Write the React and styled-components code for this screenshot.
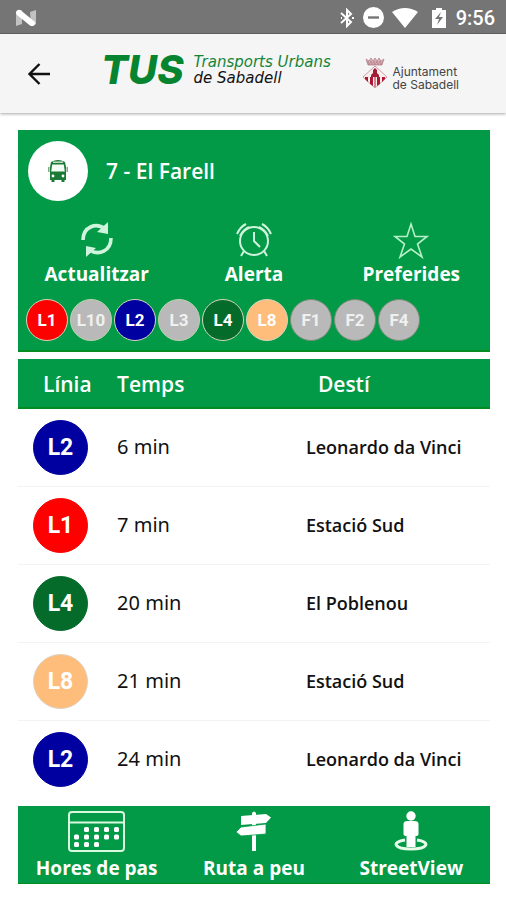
import React from "react";
import styled, { createGlobalStyle } from "styled-components";

const GlobalStyle = createGlobalStyle`
  *, *::before, *::after { box-sizing: border-box; }
  body {
    margin: 0;
    background: #fff;
    color: #111;
    font-family: "Noto Sans", "Open Sans", sans-serif;
  }
`;

const GREEN = "#029a46";

const Screen = styled.div`
  min-height: 100vh;
  display: flex;
  flex-direction: column;
`;

const StatusBar = styled.div`
  height: 34px;
  padding: 2px 11px 0 15px;
  display: flex;
  align-items: center;
  justify-content: space-between;
  background: #757575;
  border-bottom: 1px solid #646464;
  color: #fff;
`;

const StatusIcons = styled.div`
  display: flex;
  align-items: center;
  gap: 8px;
`;

const Clock = styled.time`
  font: 500 20px/24px Roboto, sans-serif;
  margin-left: 2px;
`;

const AppBar = styled.header`
  height: 79px;
  padding: 0 47px 0 23px;
  display: flex;
  align-items: center;
  background: #f5f5f5;
  box-shadow: 0 1px 3px rgba(0, 0, 0, 0.35);
`;

const BackButton = styled.button`
  display: flex;
  padding: 4px;
  border: 0;
  background: none;
  color: #111;
  cursor: pointer;
`;

const TusBrand = styled.div`
  display: flex;
  align-items: center;
  gap: 10px;
  margin-left: 46px;
  padding-bottom: 8px;
`;

const TusMark = styled.span`
  color: #06842f;
  font: italic 800 40px/32px Inter, sans-serif;
`;

const TusName = styled.span`
  display: flex;
  flex-direction: column;
  color: #111;
  font: italic 400 15px/16px "DejaVu Sans", sans-serif;
  white-space: nowrap;
`;

const GreenText = styled.span`
  color: #16853a;
`;

const CouncilBrand = styled.div`
  display: flex;
  align-items: center;
  gap: 4px;
  margin-left: auto;
`;

const CouncilName = styled.span`
  display: flex;
  flex-direction: column;
  padding-top: 8px;
  color: #444;
  font: 12px/13px Inter, sans-serif;
  white-space: nowrap;
`;

const Content = styled.main`
  flex: 1;
  display: flex;
  flex-direction: column;
  padding: 17px 16px 16px 18px;
`;

const StopCard = styled.section`
  padding: 11px 0 9px;
  background: ${GREEN};
  color: #fff;
  border-bottom: 2px solid #048c22;
`;

const StopTitle = styled.div`
  display: flex;
  align-items: center;
  gap: 18px;
  padding-left: 10px;
`;

const BusCircle = styled.span`
  display: grid;
  place-items: center;
  width: 60px;
  height: 60px;
  border-radius: 50%;
  background: #fff;
`;

const StopName = styled.h1`
  margin: 0;
  font: 600 21px/28px "Open Sans", sans-serif;
`;

const Actions = styled.div`
  display: grid;
  grid-template-columns: repeat(3, 1fr);
`;

const TopActions = styled(Actions)`
  padding-top: 19px;
`;

const ActionButton = styled.button`
  display: flex;
  flex-direction: column;
  align-items: center;
  padding: 0;
  border: 0;
  background: none;
  color: #fff;
  font: 700 19px/28px "Open Sans", sans-serif;
  white-space: nowrap;
  cursor: pointer;
`;

const Lines = styled.ul`
  display: flex;
  gap: 2px;
  margin: 0;
  padding: 11px 0 0 8px;
  list-style: none;
`;

const LineBadge = styled.li`
  display: grid;
  place-items: center;
  width: 42px;
  height: 42px;
  border: 1px solid ${(p) => p.$edge || "#d5d5bd"};
  border-radius: 50%;
  background: ${(p) => p.$color};
  color: ${(p) => (p.$off ? "#f0f0f0" : "#fff")};
  font: 700 17px/20px Roboto, sans-serif;
`;

const Timetable = styled.table`
  width: 100%;
  margin-top: 7px;
  border-collapse: collapse;
  table-layout: fixed;
`;

const HeadCell = styled.th`
  width: ${(p) => p.$width};
  height: 49px;
  padding: 2px 0 0 ${(p) => p.$indent};
  background: ${GREEN};
  border-bottom: 2px solid #048c22;
  color: #fff;
  text-align: left;
  font: 600 21px/28px "Open Sans", sans-serif;
`;

const Row = styled.tr`
  height: 78px;
  border-bottom: 1px solid #f3f3f3;
  &:last-child { border-bottom: 0; }
`;

const Cell = styled.td`
  padding: ${(p) => p.$pad || "0"};
  font-size: ${(p) => p.$size || "20px"};
  font-weight: ${(p) => p.$weight || 400};
  line-height: 24px;
  white-space: nowrap;
`;

const Destination = styled(Cell)`
  font-family: "Open Sans", sans-serif;
`;

const RowBadge = styled.span`
  display: grid;
  place-items: center;
  width: 55px;
  height: 55px;
  padding-top: 2px;
  border: 1px solid ${(p) => p.$edge || p.$color};
  border-radius: 50%;
  background: ${(p) => p.$color};
  color: #fff;
  font: 700 23px/28px Roboto, sans-serif;
`;

const BottomBar = styled.nav`
  margin-top: 8px;
  padding: 4px 0 1px;
  background: ${GREEN};
  border-bottom: 1px solid #048c22;
`;

const NougatIcon = () => (
  <svg width="22" height="18" viewBox="0 0 22 18" aria-hidden="true">
    <path d="M1 3l6-2v14l-6 2z" fill="#c2c2c2" />
    <path d="M15 3l6-2v14l-5 2z" fill="#c2c2c2" />
    <path d="M2 1.500q2-1.500 4 0L20 13q1 2-1 3.500-2 1-4 0L2 6q-2-2.500 0-4.500z" fill="#fff" />
  </svg>
);

const BluetoothIcon = () => (
  <svg width="16" height="20" viewBox="0 0 16 20" fill="none" stroke="#fff" strokeWidth="2" aria-hidden="true">
    <path d="M2 5l10 9-4 4V2l4 4-10 9" />
    <path d="M2 10h1M13 10h2" />
  </svg>
);

const DndIcon = () => (
  <svg width="21" height="21" viewBox="0 0 21 21" aria-hidden="true">
    <circle cx="10.5" cy="10.5" r="10.5" fill="#fff" />
    <path d="M5 10.500h11" stroke="#757575" strokeWidth="2.400" />
  </svg>
);

const WifiIcon = () => (
  <svg width="26" height="20" viewBox="0 0 26 20" aria-hidden="true">
    <path d="M0 4q13-8 26 0L13 20z" fill="#fff" />
  </svg>
);

const BatteryIcon = () => (
  <svg width="20" height="20" viewBox="0 0 20 20" aria-hidden="true">
    <path d="M6 2h4V0h6v2h4v18H6z" fill="#fff" />
    <path d="M15 4l-6 7h4l-2 6 6-8h-4z" fill="#757575" />
  </svg>
);

const BackIcon = () => (
  <svg width="24" height="24" viewBox="0 0 24 24" fill="none" stroke="currentColor" strokeWidth="2.400" aria-hidden="true">
    <path d="M12.500 2L2.500 12l10 10M2.500 12H23" />
  </svg>
);

const CrestIcon = () => (
  <svg width="26" height="33" viewBox="0 0 26 33" aria-hidden="true">
    <path d="M4 2l2 6h14l2-6-3 2-2-3-2 3-2-3-2 3-2-3-2 3z" fill="#d6adb3" stroke="#b98792" strokeWidth="0.800" />
    <path d="M5 5h16M6 7h14" stroke="#a87582" strokeDasharray="2 1" />
    <path d="M13 9l12 11-12 11L1 20z" fill="#f8efef" stroke="#d09ba5" />
    <path d="M3 20h3v5l-3-3zM8 20h3v9l-3-2zM15 20h3v7l-3 2zM20 20h3v2l-3 3z" fill="#ad1732" />
    <path d="M11 13l2-2 2 2v3l2 2v2H9v-2l2-2z" fill="#a51d35" />
    <path d="M13 20v10" stroke="#ad1732" />
  </svg>
);

const BusIcon = () => (
  <svg width="20" height="24" viewBox="0 0 20 24" aria-hidden="true">
    <path d="M3 3q7-4 14 0l1 5v13h-1.500v2h-3v-2h-7v2h-3v-2H2V8z" fill="#1b7a35" />
    <path d="M4.200 5.500h11.600l1 7H3.200z" fill="#f4fbf4" />
    <path d="M5 3.200h10" stroke="#c8dccb" strokeWidth="1.500" />
    <path d="M.8 8v5M19.200 8v5" stroke="#5f936b" strokeWidth="1.200" />
    <circle cx="5" cy="17" r="1.400" fill="#fff" />
    <circle cx="15" cy="17" r="1.400" fill="#fff" />
  </svg>
);

const RefreshIcon = () => (
  <svg width="38" height="40" viewBox="0 0 38 40" fill="none" stroke="#cff3dc" strokeWidth="3.600" aria-hidden="true">
    <path d="M5 20C5 7 18 2 27 9" />
    <path d="M33 18c0 13-12 18-22 12" />
    <path d="M30 2v12l-11-2zM8 37V26l10 2z" fill="#cff3dc" stroke="none" />
  </svg>
);

const AlarmIcon = () => (
  <svg width="40" height="40" viewBox="0 0 40 40" fill="none" stroke="#cff3dc" strokeWidth="2" aria-hidden="true">
    <circle cx="20" cy="21" r="14" />
    <path d="M20 12v9l6 6M10 31l-3 5M30 31l3 5" />
    <path d="M3 14Q6 7 12 4M6 16q3-6 9-9M37 14Q34 7 28 4M34 16q-3-6-9-9" />
  </svg>
);

const StarIcon = () => (
  <svg width="40" height="40" viewBox="0 0 40 40" fill="none" stroke="#b5f0c8" strokeWidth="1.600" aria-hidden="true">
    <path d="M20 4l4 12.500h12L26.500 24 31 37l-11-8-11 8 4.500-13L4 16.500h12z" />
  </svg>
);

const CALENDAR_DOTS = [[1, 0], [2, 0], [3, 0], [4, 0], [0, 1], [1, 1], [2, 1], [3, 1], [4, 1], [0, 2], [1, 2], [2, 2]];

const CalendarIcon = () => (
  <svg width="58" height="44" viewBox="0 0 58 44" fill="none" aria-hidden="true">
    <rect x="1" y="2" width="55" height="39" rx="3" stroke="#d9f9df" strokeWidth="2" />
    <path d="M1 12.500h55" stroke="#d9f9df" strokeWidth="2" />
    {CALENDAR_DOTS.map(([c, r]) => (
      <rect key={`${c}-${r}`} x={6 + c * 10} y={17 + r * 7.5} width="5" height="5" rx="1.500" fill="#fff" />
    ))}
  </svg>
);

const SignpostIcon = () => (
  <svg width="38" height="44" viewBox="0 0 38 44" fill="#fff" aria-hidden="true">
    <path d="M17 3q2-3 4 0v38h-4z" />
    <path d="M6 6l25-2 5 3.500-5 5.500L6 15z" />
    <path d="M31 14v10L6 26l-5-4 5-5z" stroke="#029a46" strokeWidth="0.800" />
  </svg>
);

const StreetViewIcon = () => (
  <svg width="34" height="44" viewBox="0 0 34 44" aria-hidden="true">
    <path d="M11 30C-3 32 0 39 17 39s20-7 6-9" fill="none" stroke="#e7fbe9" strokeWidth="3" />
    <path d="M9.500 14q0-3 4-3h7q4 0 4 3v10q0 2-3 2v11h-9V26q-3 0-3-2z" fill="#fff" />
    <circle cx="17" cy="6" r="4.700" fill="#fff" />
  </svg>
);

const STOP_LINES = [
  { name: "L1", color: "#fe0000" },
  { name: "L10", color: "#b9b9b9", edge: "#bbd3b0", off: true },
  { name: "L2", color: "#0000a0" },
  { name: "L3", color: "#b9b9b9", edge: "#bbd3b0", off: true },
  { name: "L4", color: "#056b2b" },
  { name: "L8", color: "#ffbd7c" },
  { name: "F1", color: "#b9b9b9", edge: "#778d76", off: true },
  { name: "F2", color: "#b9b9b9", edge: "#778d76", off: true },
  { name: "F4", color: "#b9b9b9", edge: "#778d76", off: true },
];

const ARRIVALS = [
  { line: "L2", color: "#0000a0", time: "6 min", to: "Leonardo da Vinci" },
  { line: "L1", color: "#fe0000", time: "7 min", to: "Estació Sud" },
  { line: "L4", color: "#056b2b", time: "20 min", to: "El Poblenou" },
  { line: "L8", color: "#ffbd7c", edge: "#ddd0c1", time: "21 min", to: "Estació Sud" },
  { line: "L2", color: "#0000a0", time: "24 min", to: "Leonardo da Vinci" },
];

export default function App() {
  return (
    <Screen>
      <GlobalStyle />
      <StatusBar>
        <NougatIcon />
        <StatusIcons>
          <BluetoothIcon />
          <DndIcon />
          <WifiIcon />
          <BatteryIcon />
          <Clock>9:56</Clock>
        </StatusIcons>
      </StatusBar>
      <AppBar>
        <BackButton type="button" aria-label="Enrere"><BackIcon /></BackButton>
        <TusBrand>
          <TusMark>TUS</TusMark>
          <TusName>
            <GreenText>Transports Urbans</GreenText>
            <span>de Sabadell</span>
          </TusName>
        </TusBrand>
        <CouncilBrand>
          <CrestIcon />
          <CouncilName>
            <span>Ajuntament</span>
            <span>de Sabadell</span>
          </CouncilName>
        </CouncilBrand>
      </AppBar>
      <Content>
        <StopCard>
          <StopTitle>
            <BusCircle><BusIcon /></BusCircle>
            <StopName>7 - El Farell</StopName>
          </StopTitle>
          <TopActions>
            <ActionButton type="button"><RefreshIcon />Actualitzar</ActionButton>
            <ActionButton type="button"><AlarmIcon />Alerta</ActionButton>
            <ActionButton type="button"><StarIcon />Preferides</ActionButton>
          </TopActions>
          <Lines>
            {STOP_LINES.map((l) => (
              <LineBadge key={l.name} $color={l.color} $edge={l.edge} $off={l.off}>{l.name}</LineBadge>
            ))}
          </Lines>
        </StopCard>
        <Timetable>
          <thead>
            <tr>
              <HeadCell scope="col" $width="21%" $indent="25px">Línia</HeadCell>
              <HeadCell scope="col" $width="40%" $indent="0">Temps</HeadCell>
              <HeadCell scope="col" $width="39%" $indent="12px">Destí</HeadCell>
            </tr>
          </thead>
          <tbody>
            {ARRIVALS.map((a, i) => (
              <Row key={i}>
                <Cell $pad="0 0 0 15px"><RowBadge $color={a.color} $edge={a.edge}>{a.line}</RowBadge></Cell>
                <Cell>{a.time}</Cell>
                <Destination $size="18px" $weight={600}>{a.to}</Destination>
              </Row>
            ))}
          </tbody>
        </Timetable>
        <BottomBar>
          <Actions>
            <ActionButton type="button"><CalendarIcon />Hores de pas</ActionButton>
            <ActionButton type="button"><SignpostIcon />Ruta a peu</ActionButton>
            <ActionButton type="button"><StreetViewIcon />StreetView</ActionButton>
          </Actions>
        </BottomBar>
      </Content>
    </Screen>
  );
}
